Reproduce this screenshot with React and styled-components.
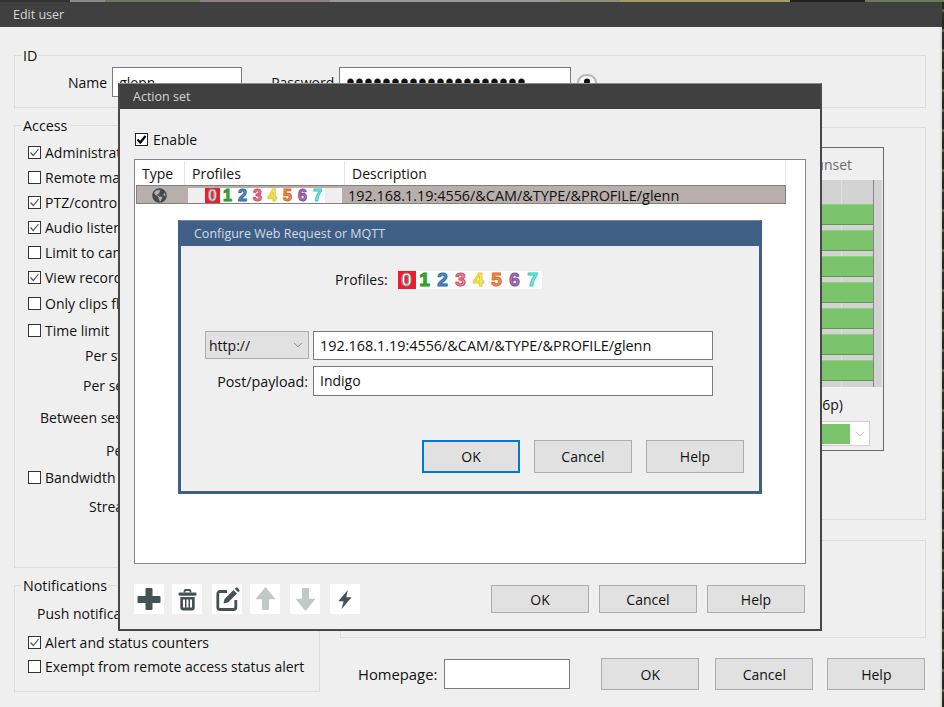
import React from "react";
import styled, { createGlobalStyle } from "styled-components";
import { ChevronDown } from "lucide-react";
import { FaGlobeAmericas } from "react-icons/fa";

const Global = createGlobalStyle`
  html, body { margin: 0; padding: 0; background: #222; }
  * { box-sizing: border-box; }
  body { font-family: "Open Sans", "Noto Sans", "Liberation Sans", sans-serif; font-size: 14px; color: #111; }
`;

const Desktop = styled.div`
  position: relative;
  width: 944px;
  height: 707px;
  overflow: hidden;
  padding-top: 2px;
  background:
    linear-gradient(90deg, #333 0 70px, #8d8a84 70px 105px, #6f7a5d 105px 200px, #8a7f86 200px 330px, #999 330px 560px, #8f8f7d 560px 620px, #a49a68 620px 790px, #222 790px 865px, #6d7a58 865px 944px) top / 944px 2px no-repeat,
    repeating-linear-gradient(180deg, #23281f 0 9px, #55684a 9px 12px, #2d2d2d 12px 20px);
`;

const EditWindow = styled.div`
  width: 942px;
  height: 705px;
  background: #efefef;
  display: flex;
  flex-direction: column;
`;

const TitleBar = styled.div`
  height: ${(p) => p.$h || 25}px;
  flex: none;
  display: flex;
  align-items: center;
  padding-left: ${(p) => p.$pad || 13}px;
  background: ${(p) => p.$bg || "#404040"};
  color: ${(p) => p.$fg || "#d6d6d6"};
  font-size: 12.5px;
`;

const EditBody = styled.div`
  flex: 1;
  padding: 28px 14px 0 14px;
  border-right: 2px solid #dedede;
`;

const Group = styled.div`
  position: relative;
  border: 1px solid #dcdcdc;
  height: ${(p) => p.$h}px;
  padding: ${(p) => p.$pad || "0"};
  flex: none;
`;

const Legend = styled.span`
  position: absolute;
  left: 7px;
  top: -10px;
  padding: 0 1px;
  background: #efefef;
  font-size: 14.3px;
  line-height: 20px;
`;

const IdRow = styled.div`
  display: flex;
  align-items: center;
`;

const FieldLabel = styled.label`
  font-size: ${(p) => p.$size || 14}px;
  margin-left: ${(p) => p.$ml || 0}px;
  margin-right: ${(p) => p.$mr || 5}px;
`;

const TextBox = styled.input`
  width: ${(p) => p.$w}px;
  height: ${(p) => p.$h || 30}px;
  flex: none;
  border: 1px solid #7a7a7a;
  background: #fff;
  outline: none;
  padding: 0 6px ${(p) => p.$pb || 0}px;
  font: inherit;
  font-size: ${(p) => p.$size || 14}px;
  color: #111;
  letter-spacing: ${(p) => p.$track || 0}px;
`;

const PasswordBox = styled(TextBox)`
  font-family: "Liberation Sans", Arimo, sans-serif;
`;

const EyeSvg = styled.svg`
  width: 22px;
  height: 22px;
  margin-left: 5px;
  flex: none;
`;

const Columns = styled.div`
  display: flex;
  gap: 20px;
  margin-top: 17px;
`;

const LeftCol = styled.div`
  width: 306px;
  flex: none;
  display: flex;
  flex-direction: column;
  gap: 17px;
`;

const RightCol = styled.div`
  width: 586px;
  flex: none;
  margin-top: 2px;
  display: flex;
  flex-direction: column;
  gap: 20px;
`;

const Rows = styled.div`
  display: flex;
  flex-direction: column;
`;

const OptionRow = styled.div`
  height: 20px;
  display: flex;
  align-items: center;
  gap: 4px;
  white-space: nowrap;
  margin-top: ${(p) => p.$top || 0}px;
  padding-left: ${(p) => p.$indent || 13}px;
  font-size: 14px;
`;

const Box = styled.span`
  width: 13px;
  height: 13px;
  flex: none;
  background: #fff;
  border: 1px solid ${(p) => (p.$strong ? "#222" : "#333")};
  display: flex;
  align-items: center;
  justify-content: center;
`;

const CheckSvg = styled.svg`
  width: 11px;
  height: 11px;
`;

function Check({ on, strong }) {
  return (
    <Box $strong={strong}>
      {on && (
        <CheckSvg viewBox="0 0 11 11">
          <path d="M1.5 5.5 L4.3 8.5 L9.5 2" fill="none" stroke={strong ? "#000" : "#555"} strokeWidth={strong ? 2.2 : 1.2} />
        </CheckSvg>
      )}
    </Box>
  );
}

const SchedulePanel = styled.div`
  margin: 19px 0 0 43px;
  width: 500px;
  height: 304px;
  border: 1px solid #6a6a6a;
  background: #efefef;
  display: flex;
  flex-direction: column;
  align-items: flex-end;
`;

const PanelHead = styled.div`
  height: 32px;
  display: flex;
  align-items: center;
  padding-right: 31px;
  color: #6d6d6d;
  font-size: 14px;
`;

const Grid = styled.div`
  width: 496px;
  height: 207px;
  margin-right: 1px;
  background: #d3d3d3;
  border-right: 8px solid #d3d3d3;
  position: relative;
  padding-top: 24px;
  display: flex;
  flex-direction: column;
  gap: 5px;
  &::after {
    content: "";
    position: absolute;
    right: 0;
    top: 0;
    bottom: 0;
    width: 1px;
    background: #858585;
  }
  &::before {
    content: "";
    position: absolute;
    right: 32px;
    top: 0;
    bottom: 0;
    width: 1px;
    background: #e0e0e0;
  }
`;

const Bar = styled.div`
  height: 21px;
  margin-right: 1px;
  background: #7cc46c;
  border-bottom: 1px solid #5d9a50;
  border-top: 1px solid #8fcf80;
  position: relative;
`;

const PanelNote = styled.div`
  height: 34px;
  display: flex;
  align-items: center;
  padding-right: 40px;
  font-size: 14px;
`;

const ColorSelect = styled.div`
  width: 200px;
  height: 25px;
  margin-right: 13px;
  background: #fff;
  border: 1px solid #d0d0d0;
  display: flex;
  align-items: stretch;
  padding: 2px 0 1px 2px;
  color: #888;
`;

const Swatch = styled.div`
  flex: 1;
  background: #7cc46c;
`;

const ChevronCell = styled.div`
  width: 19px;
  flex: none;
  display: flex;
  align-items: center;
  justify-content: center;
`;

const Footer = styled.div`
  display: flex;
  align-items: center;
  padding-left: 18px;
`;

const Btn = styled.button`
  width: 98px;
  height: ${(p) => p.$h || 28}px;
  flex: none;
  background: #e1e1e1;
  border: ${(p) => (p.$primary ? "2px solid #0078d7" : "1px solid #adadad")};
  font: inherit;
  font-size: 14px;
  color: #111;
  padding: 0;
  margin-left: ${(p) => p.$ml || 0}px;
`;

const ActionWindow = styled.div`
  position: absolute;
  z-index: 5;
  left: 118px;
  top: 83px;
  width: 704px;
  height: 548px;
  background: #efefef;
  border: 2px solid #484848;
  border-top: 1px solid #8a8a8a;
  display: flex;
  flex-direction: column;
`;

const ActionBody = styled.div`
  flex: 1;
  padding: 23px 14px 0;
  display: flex;
  flex-direction: column;
`;

const EnableRow = styled.div`
  height: 14px;
  display: flex;
  align-items: center;
  gap: 5px;
  padding-left: 1px;
  font-size: 14px;
  line-height: 13px;
`;

const ListBox = styled.div`
  position: relative;
  height: 405px;
  margin-top: 13px;
  background: #fff;
  border: 1px solid #85858f;
  padding: 1px 0 0 1px;
`;

const Columns3 = styled.div`
  display: grid;
  grid-template-columns: 49px 160px 441px;
  width: 650px;
`;

const HeadRow = styled(Columns3)`
  height: 24px;
`;

const HeadCell = styled.div`
  border-right: 1px solid #e5e5e5;
  padding-left: ${(p) => p.$pad || 6}px;
  display: flex;
  align-items: center;
  font-size: 14px;
`;

const SelRow = styled(Columns3)`
  height: 19px;
  background: #b8aeac;
  border: 1px solid #808080;
`;

const TypeCell = styled.div`
  display: flex;
  align-items: center;
  justify-content: center;
  color: #414b4d;
  padding: 0 4px 1px 0;
`;

const ProfileCell = styled.div`
  display: flex;
  align-items: center;
  padding-left: 2px;
`;

const DescCell = styled.div`
  display: flex;
  align-items: center;
  padding-left: 2px;
  font-size: 14.4px;
  white-space: nowrap;
`;

const Strip = styled.div`
  display: flex;
  background: #fff;
  flex: none;
  height: ${(p) => p.$h}px;
`;

const StripEnd = styled.div`
  width: ${(p) => p.$w}px;
  background: #efefef;
`;

const Digit = styled.span`
  width: ${(p) => p.$w}px;
  height: 100%;
  display: flex;
  align-items: center;
  justify-content: center;
  background: ${(p) => (p.$red ? "#ee1c2e" : "transparent")};
  color: ${(p) => p.$fill};
  -webkit-text-stroke: 1px ${(p) => p.$c};
  font-family: "Liberation Sans", Arimo, sans-serif;
  font-weight: 700;
  font-size: ${(p) => p.$size}px;
  line-height: 1;
`;

const DIGITS = [
  { n: 0, c: "#8a8a8a", fill: "#fff", red: true },
  { n: 1, c: "#2a962a", fill: "#3aae2d" },
  { n: 2, c: "#2c68a2", fill: "#5d90c0" },
  { n: 3, c: "#d64a64", fill: "#e58a96" },
  { n: 4, c: "#e3cb14", fill: "#f5ea8c" },
  { n: 5, c: "#e0681a", fill: "#e89058" },
  { n: 6, c: "#854a9a", fill: "#a87ab8" },
  { n: 7, c: "#30cbc0", fill: "#9be9e2" },
];

function ProfileDigits({ w, size }) {
  return DIGITS.map((d) => (
    <Digit key={d.n} $w={w} $size={size} $red={d.red} $c={d.c} $fill={d.fill}>
      {d.n}
    </Digit>
  ));
}

const Dialog = styled.div`
  position: absolute;
  left: 43px;
  top: 60px;
  width: 584px;
  height: 274px;
  background: #efefef;
  border: 3px solid #3f5f87;
  border-top: 1px solid #7d8ba0;
  display: flex;
  flex-direction: column;
`;

const DialogProfiles = styled.div`
  display: flex;
  align-items: center;
  height: 19px;
  margin-top: 24px;
  padding-left: 154px;
  gap: 10px;
  font-size: 14px;
`;

const FormRow = styled.div`
  display: flex;
  align-items: ${(p) => p.$align || "flex-start"};
  margin-top: ${(p) => p.$top}px;
  padding-left: 24px;
  font-size: 14px;
`;

const SchemeSelect = styled.div`
  width: 104px;
  height: 28px;
  background: #e1e1e1;
  border: 1px solid #adadad;
  margin-right: 4px;
  display: flex;
  align-items: center;
  justify-content: space-between;
  padding: 0 3px;
  color: #555;
`;

const SchemeText = styled.span`
  color: #111;
`;

const PayloadLabel = styled.label`
  width: 104px;
  padding-right: 1px;
  margin-right: 4px;
  text-align: right;
  white-space: nowrap;
  font-size: 14.3px;
`;

const ButtonRow = styled.div`
  display: flex;
  justify-content: flex-end;
  gap: 14px;
  margin-top: 44px;
  padding-right: 15px;
`;

const ActionFooter = styled.div`
  display: flex;
  align-items: flex-start;
  margin-top: 20px;
`;

const ToolBtn = styled.div`
  width: 30px;
  height: 30px;
  flex: none;
  background: #fff;
  margin-left: ${(p) => p.$ml || 0}px;
`;

const ToolSvg = styled.svg`
  display: block;
  width: 30px;
  height: 30px;
`;

const ActionButtons = styled.div`
  display: flex;
  gap: 10px;
  margin-left: auto;
  margin-top: 1px;
  margin-right: 1px;
`;

const DARK = "#465153";
const GREY = "#c2c7c7";

const ICONS = [
  {
    ml: 0,
    svg: <path fill={DARK} d="M11.5 5a1 1 0 0 1 1-1h5a1 1 0 0 1 1 1v7h7a1 1 0 0 1 1 1v5a1 1 0 0 1-1 1h-7v6a1 1 0 0 1-1 1h-5a1 1 0 0 1-1-1v-6h-7a1 1 0 0 1-1-1v-5a1 1 0 0 1 1-1h7z" />,
  },
  {
    ml: 8,
    svg: (
      <>
        <path fill="none" stroke={DARK} strokeWidth="1.8" d="M12.5 8.5V7.2a1.2 1.2 0 0 1 1.2-1.2h3.6a1.2 1.2 0 0 1 1.2 1.2v1.3" />
        <rect fill={DARK} x="6.5" y="8.5" width="18" height="3.2" rx="1.2" />
        <path fill={DARK} fillRule="evenodd" d="M8.3 13h14.4v11a2.4 2.4 0 0 1-2.4 2.4h-9.6A2.4 2.4 0 0 1 8.3 24zM11 15.5v8h2v-8zm3.5 0v8h2v-8zm3.5 0v8h2v-8z" />
      </>
    ),
  },
  {
    ml: 10,
    svg: (
      <>
        <path fill="none" stroke={DARK} strokeWidth="2.8" d="M15 7.5H8a2.2 2.2 0 0 0-2.2 2.2v13.6A2.2 2.2 0 0 0 8 25.5h13.6a2.2 2.2 0 0 0 2.2-2.2V16" />
        <path fill={DARK} d="M11.5 19.5l1-4.5L21.5 6l3.5 3.5-9 9zM22.7 4.8l1-1a1.3 1.3 0 0 1 1.8 0l1.7 1.7a1.3 1.3 0 0 1 0 1.8l-1 1z" />
      </>
    ),
  },
  {
    ml: 8,
    svg: <path fill={GREY} d="M15.5 3L25 14.5a.5.5 0 0 1-.4.8H19V25a1 1 0 0 1-1 1h-5a1 1 0 0 1-1-1v-9.7H6.4a.5.5 0 0 1-.4-.8z" />,
  },
  {
    ml: 10,
    svg: <path fill={GREY} d="M15.5 27L25 15.5a.5.5 0 0 0-.4-.8H19V5a1 1 0 0 0-1-1h-5a1 1 0 0 0-1 1v9.7H6.4a.5.5 0 0 0-.4.8z" />,
  },
  {
    ml: 10,
    svg: <path fill={DARK} d="M17.8 6L8.3 17.2h5.2L11.6 25l10-11.8h-5.4z" />,
  },
];

const ACCESS = [
  { t: "Administrator", on: true, top: 0 },
  { t: "Remote mail", top: 5 },
  { t: "PTZ/control", on: true, top: 5 },
  { t: "Audio listen", on: true, top: 5 },
  { t: "Limit to cams", top: 5 },
  { t: "View records", on: true, top: 5 },
  { t: "Only clips flag", top: 6 },
  { t: "Time limit", top: 7 },
  { t: "Per stream", top: 5, indent: 70 },
  { t: "Per session", top: 10, indent: 68 },
  { t: "Between sessions", top: 12, indent: 25 },
  { t: "Per day", top: 13, indent: 91 },
  { t: "Bandwidth", top: 7 },
  { t: "Stream", top: 9, indent: 74 },
];

function Option({ t, on, top, indent }) {
  return (
    <OptionRow $top={top} $indent={indent}>
      {!indent && <Check on={on} />}
      <span>{t}</span>
    </OptionRow>
  );
}

export default function App() {
  return (
    <Desktop>
      <Global />
      <EditWindow>
        <TitleBar>Edit user</TitleBar>
        <EditBody>
          <Group $h={53} $pad="11px 0 0 53px">
            <Legend>ID</Legend>
            <IdRow>
              <FieldLabel>Name</FieldLabel>
              <TextBox $w={130} defaultValue="glenn" readOnly />
              <FieldLabel $ml={29}>Password</FieldLabel>
              <PasswordBox $w={232} $size={24} $track={0.6} type="password" defaultValue="glennglennglennglenn" readOnly />
              <EyeSvg viewBox="0 0 22 22">
                <ellipse cx="11" cy="11.5" rx="9" ry="7.5" fill="#fff" stroke="#bdb7b5" strokeWidth="2.2" />
                <circle cx="11" cy="10.5" r="3" fill="#111" />
              </EyeSvg>
            </IdRow>
          </Group>
          <Columns>
            <LeftCol>
              <Group $h={443} $pad="16px 0 0 0">
                <Legend>Access</Legend>
                <Rows>
                  {ACCESS.map((a) => (
                    <Option key={a.t} {...a} />
                  ))}
                </Rows>
              </Group>
              <Group $h={107} $pad="17px 0 0 0">
                <Legend>Notifications</Legend>
                <Rows>
                  <Option t="Push notifications" indent={22} top={0} />
                  <Option t="Alert and status counters" on top={9} />
                  <Option t="Exempt from remote access status alert" top={4} />
                </Rows>
              </Group>
            </LeftCol>
            <RightCol>
              <Group $h={393}>
                <SchedulePanel>
                  <PanelHead>Sunset</PanelHead>
                  <Grid>
                    {[0, 1, 2, 3, 4, 5, 6].map((i) => (
                      <Bar key={i} />
                    ))}
                  </Grid>
                  <PanelNote>(16p)</PanelNote>
                  <ColorSelect>
                    <Swatch />
                    <ChevronCell>
                      <ChevronDown size={14} strokeWidth={1} />
                    </ChevronCell>
                  </ColorSelect>
                </SchedulePanel>
              </Group>
              <Group $h={98} />
              <Footer>
                <FieldLabel $size={14.8} $mr={7}>Homepage:</FieldLabel>
                <TextBox $w={126} />
                <Btn $h={32} $ml={31}>OK</Btn>
                <Btn $h={32} $ml={16}>Cancel</Btn>
                <Btn $h={32} $ml={14}>Help</Btn>
              </Footer>
            </RightCol>
          </Columns>
        </EditBody>
      </EditWindow>

      <ActionWindow>
        <TitleBar $pad={13}>Action set</TitleBar>
        <ActionBody>
          <EnableRow>
            <Check on strong />
            <span>Enable</span>
          </EnableRow>
          <ListBox>
            <HeadRow>
              <HeadCell>Type</HeadCell>
              <HeadCell $pad={7}>Profiles</HeadCell>
              <HeadCell $pad={7}>Description</HeadCell>
            </HeadRow>
            <SelRow>
              <TypeCell>
                <FaGlobeAmericas size={15} />
              </TypeCell>
              <ProfileCell>
                <Strip $h={15}>
                  <StripEnd $w={17} />
                  <ProfileDigits w={15} size={16} />
                  <StripEnd $w={17} />
                </Strip>
              </ProfileCell>
              <DescCell>192.168.1.19:4556/&amp;CAM/&amp;TYPE/&amp;PROFILE/glenn</DescCell>
            </SelRow>
            <Dialog>
              <TitleBar $h={25} $pad={13} $bg="#3f5f87" $fg="#d4dce6">Configure Web Request or MQTT</TitleBar>
              <DialogProfiles>
                <span>Profiles:</span>
                <Strip $h={18}>
                  <ProfileDigits w={18} size={19} />
                </Strip>
              </DialogProfiles>
              <FormRow $top={42}>
                <SchemeSelect>
                  <SchemeText>http://</SchemeText>
                  <ChevronDown size={14} strokeWidth={1.2} />
                </SchemeSelect>
                <TextBox $w={400} $h={29} $size={14.4} defaultValue="192.168.1.19:4556/&CAM/&TYPE/&PROFILE/glenn" readOnly />
              </FormRow>
              <FormRow $top={6} $align="center">
                <PayloadLabel>Post/payload:</PayloadLabel>
                <TextBox $w={400} $h={30} $pb={2} defaultValue="Indigo" readOnly />
              </FormRow>
              <ButtonRow>
                <Btn $h={33} $primary>OK</Btn>
                <Btn $h={33}>Cancel</Btn>
                <Btn $h={33}>Help</Btn>
              </ButtonRow>
            </Dialog>
          </ListBox>
          <ActionFooter>
            {ICONS.map((ic, i) => (
              <ToolBtn key={i} $ml={ic.ml}>
                <ToolSvg viewBox="0 0 30 30">{ic.svg}</ToolSvg>
              </ToolBtn>
            ))}
            <ActionButtons>
              <Btn>OK</Btn>
              <Btn>Cancel</Btn>
              <Btn>Help</Btn>
            </ActionButtons>
          </ActionFooter>
        </ActionBody>
      </ActionWindow>
    </Desktop>
  );
}
